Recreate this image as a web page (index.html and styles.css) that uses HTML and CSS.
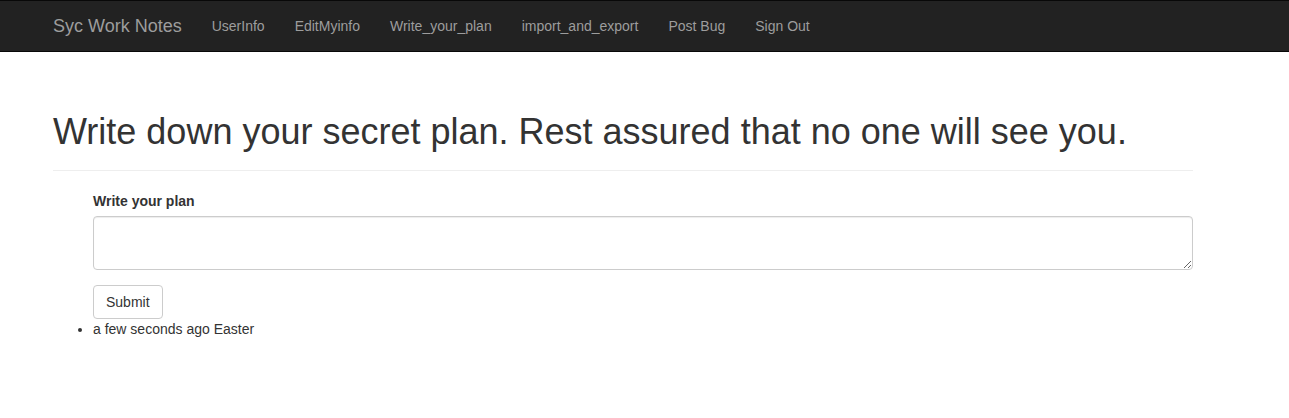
FILE: index.html
```html
<!DOCTYPE html>
<html lang="en">
<head>
<meta charset="utf-8">
<title>Write your plan</title>
<link rel="stylesheet" href="styles.css">
</head>
<body>
<nav class="navbar">
  <div class="container nav-inner">
    <a class="brand" href="#">Syc Work Notes</a>
    <ul class="nav-links">
      <li><a href="#">UserInfo</a></li>
      <li><a href="#">EditMyinfo</a></li>
      <li><a href="#">Write_your_plan</a></li>
      <li><a href="#">import_and_export</a></li>
      <li><a href="#">Post Bug</a></li>
      <li><a href="#">Sign Out</a></li>
    </ul>
  </div>
</nav>
<main class="container">
  <div class="page-header">
    <h1>Write down your secret plan. Rest assured that no one will see you.</h1>
  </div>
  <form class="plan-form">
    <div class="form-group">
      <label class="form-label" for="plan">Write your plan</label>
      <textarea id="plan" class="form-control" rows="2"></textarea>
    </div>
    <button type="button" class="btn">Submit</button>
  </form>
  <ul class="plans">
    <li>a few seconds ago Easter</li>
  </ul>
</main>
</body>
</html>
```

FILE: styles.css
```css
* { box-sizing: border-box; }
html, body {
  margin: 0;
  padding: 0;
}
body {
  font-family: "Liberation Sans", Arial, Helvetica, sans-serif;
  font-size: 14px;
  line-height: 20px;
  color: #333;
  background: #fff;
}
.container {
  width: 1170px;
  margin-left: 38px;
  padding: 0 15px;
}
.navbar {
  background: #222;
  border-top: 1px solid #080808;
  border-bottom: 1px solid #080808;
  height: 52px;
}
.nav-inner {
  display: flex;
  align-items: stretch;
  height: 50px;
}
.brand {
  display: block;
  margin-left: -15px;
  padding: 15px;
  height: 50px;
  font-size: 18px;
  line-height: 20px;
  color: #9d9d9d;
  text-decoration: none;
}
.nav-links {
  display: flex;
  margin: 0;
  padding: 0;
  list-style: none;
}
.nav-links a {
  display: block;
  padding: 15px;
  line-height: 20px;
  color: #9d9d9d;
  text-decoration: none;
}
.page-header {
  display: flow-root;
  margin: 40px 0 20px;
  padding-bottom: 8px;
  border-bottom: 1px solid #eee;
}
.page-header h1 {
  margin: 20px 0 10px;
  font-size: 36px;
  font-weight: 500;
  line-height: 1.1;
  color: #333;
}
.plan-form {
  padding-left: 40px;
}
.form-group {
  margin-bottom: 15px;
}
.form-label {
  display: inline-block;
  margin-bottom: 5px;
  font-weight: 700;
}
.form-control {
  display: block;
  width: 100%;
  height: 54px;
  padding: 6px 12px;
  font: inherit;
  color: #555;
  background: #fff;
  border: 1px solid #ccc;
  border-radius: 4px;
  box-shadow: inset 0 1px 1px rgba(0,0,0,.075);
  resize: vertical;
}
.btn {
  display: inline-block;
  padding: 6px 12px;
  font: inherit;
  line-height: 20px;
  color: #333;
  background: #fff;
  border: 1px solid #ccc;
  border-radius: 4px;
  cursor: pointer;
}
.plans {
  margin: 0 0 10px;
  padding-left: 40px;
}
```
